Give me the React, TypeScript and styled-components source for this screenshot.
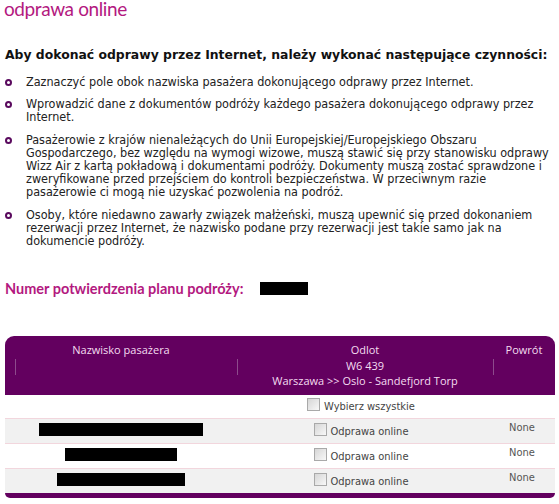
import React from "react";
import styled, { createGlobalStyle } from "styled-components";

const Global = createGlobalStyle`
  html, body { margin: 0; padding: 0; background: #fff; }
  body { font-family: "DejaVu Sans Condensed", "DejaVu Sans", sans-serif; color: #222; }
`;

const Page = styled.div`
  width: 559px;
  height: 504px;
  overflow: hidden;
  padding: 0 4px 0 5px;
  box-sizing: border-box;
`;

const Title = styled.h1`
  margin: 0 0 0 -1px;
  font-family: Lato, sans-serif;
  font-weight: 400;
  font-size: 19px;
  letter-spacing: -0.4px;
  line-height: 18px;
  color: #b3197f;
`;

const Intro = styled.p`
  margin: 29px 0 0;
  font-family: "DejaVu Sans", sans-serif;
  font-weight: bold;
  font-size: 12.4px;
  line-height: 16px;
  color: #111;
`;

const List = styled.ul`
  list-style: none;
  margin: 12px 0 0;
  padding: 0;
  display: flex;
  flex-direction: column;
  gap: 9px;
`;

const Item = styled.li`
  position: relative;
  padding-left: 21px;
  font-size: 12.5px;
  line-height: 13.2px;
  color: #222;
  &::before {
    content: "";
    position: absolute;
    left: 0;
    top: 4px;
    width: 3px;
    height: 3px;
    border: 2px solid #5a0a5e;
    border-radius: 50%;
  }
`;

const Confirm = styled.div`
  margin-top: 33px;
  display: flex;
  align-items: center;
  gap: 17px;
  font-family: Lato, sans-serif;
  font-weight: 700;
  font-size: 14.5px;
  color: #b3197f;
`;

const Redacted = styled.span<{ w: number }>`
  display: inline-block;
  width: ${(p) => p.w}px;
  height: 13px;
  background: #000;
`;

const Table = styled.table`
  margin-top: 39px;
  width: 550px;
  border-collapse: separate;
  border-spacing: 0;
  font-size: 11px;
`;

const HeadCell = styled.th<{ w: number; sep?: number }>`
  position: relative;
  width: ${(p) => p.w}px;
  background: #63005f;
  color: #f3dcf0;
  font-family: "Open Sans", sans-serif;
  font-weight: 400;
  font-size: 11px;
  line-height: 15.5px;
  padding: 6px 0 6px;
  vertical-align: top;
  text-align: center;
  &:first-child { border-top-left-radius: 9px; }
  &:last-child { border-top-right-radius: 9px; }
  &::before {
    content: "";
    display: ${(p) => (p.sep !== undefined ? "block" : "none")};
    position: absolute;
    left: ${(p) => p.sep ?? 0}px;
    top: 23px;
    width: 1px;
    height: 16px;
    background: #8d4a8c;
  }
`;

const HeadLine = styled.div``;

const Row = styled.tr<{ alt?: boolean }>`
  background: ${(p) => (p.alt ? "#f1f1f1" : "#fff")};
`;

const Cell = styled.td`
  height: 24px;
  padding: 0;
  text-align: center;
  vertical-align: middle;
  border-top: 1px solid #f2d6dd;
  color: #444;
  font-size: 11px;
`;

const TopCell = styled.td`
  height: 23px;
  padding: 0;
  text-align: center;
  vertical-align: middle;
  font-size: 11px;
  color: #444;
`;

const Check = styled.label<{ shift?: number }>`
  display: inline-flex;
  align-items: flex-end;
  gap: 4px;
  color: #444;
  font-size: 11px;
  margin-left: ${(p) => p.shift ?? 0}px;
`;

const Box = styled.span`
  display: inline-block;
  width: 11px;
  height: 11px;
  border: 1px solid #a9a9a9;
  background: linear-gradient(135deg, #d6d6d6, #f8f8f8);
  margin-bottom: 2px;
`;

const NoneText = styled.span`
  display: inline-block;
  margin-left: -4px;
  transform: translateY(-3px);
  color: #555;
`;

const Foot = styled.td`
  height: 5px;
  padding: 0;
  background: #63005f;
  &:first-child { border-bottom-left-radius: 5px; }
  &:last-child { border-bottom-right-radius: 5px; }
`;

const rows = [
  { w: 164, alt: true },
  { w: 112, alt: false },
  { w: 128, alt: true },
];

export default function App() {
  return (
    <Page>
      <Global />
      <Title>odprawa online</Title>
      <Intro>Aby dokonać odprawy przez Internet, należy wykonać następujące czynności:</Intro>
      <List>
        <Item>Zaznaczyć pole obok nazwiska pasażera dokonującego odprawy przez Internet.</Item>
        <Item>Wprowadzić dane z dokumentów podróży każdego pasażera dokonującego odprawy przez Internet.</Item>
        <Item>
          Pasażerowie z krajów nienależących do Unii Europejskiej/Europejskiego Obszaru Gospodarczego, bez względu na wymogi wizowe, muszą stawić się przy stanowisku odprawy Wizz Air z kartą pokładową i dokumentami podróży. Dokumenty muszą zostać sprawdzone i zweryfikowane przed przejściem do kontroli bezpieczeństwa. W przeciwnym razie pasażerowie ci mogą nie uzyskać pozwolenia na podróż.
        </Item>
        <Item>
          Osoby, które niedawno zawarły związek małżeński, muszą upewnić się przed dokonaniem rezerwacji przez Internet, że nazwisko podane przy rezerwacji jest takie samo jak na dokumencie podróży.
        </Item>
      </List>
      <Confirm>
        Numer potwierdzenia planu podróży:
        <Redacted w={48} />
      </Confirm>
      <Table>
        <thead>
          <tr>
            <HeadCell w={232} sep={10}>Nazwisko pasażera</HeadCell>
            <HeadCell w={256} sep={0}>
              <HeadLine>Odlot</HeadLine>
              <HeadLine>W6 439</HeadLine>
              <HeadLine>Warszawa &gt;&gt; Oslo - Sandefjord Torp</HeadLine>
            </HeadCell>
            <HeadCell w={62} sep={0}>Powrót</HeadCell>
          </tr>
        </thead>
        <tbody>
          <tr>
            <TopCell />
            <TopCell>
              <Check shift={-8}>
                <Box />
                Wybierz wszystkie
              </Check>
            </TopCell>
            <TopCell />
          </tr>
          {rows.map((r, i) => (
            <Row key={i} alt={r.alt}>
              <Cell>
                <Redacted w={r.w} />
              </Cell>
              <Cell>
                <Check shift={-8}>
                  <Box />
                  Odprawa online
                </Check>
              </Cell>
              <Cell>
                <NoneText>None</NoneText>
              </Cell>
            </Row>
          ))}
          <tr>
            <Foot />
            <Foot />
            <Foot />
          </tr>
        </tbody>
      </Table>
    </Page>
  );
}
